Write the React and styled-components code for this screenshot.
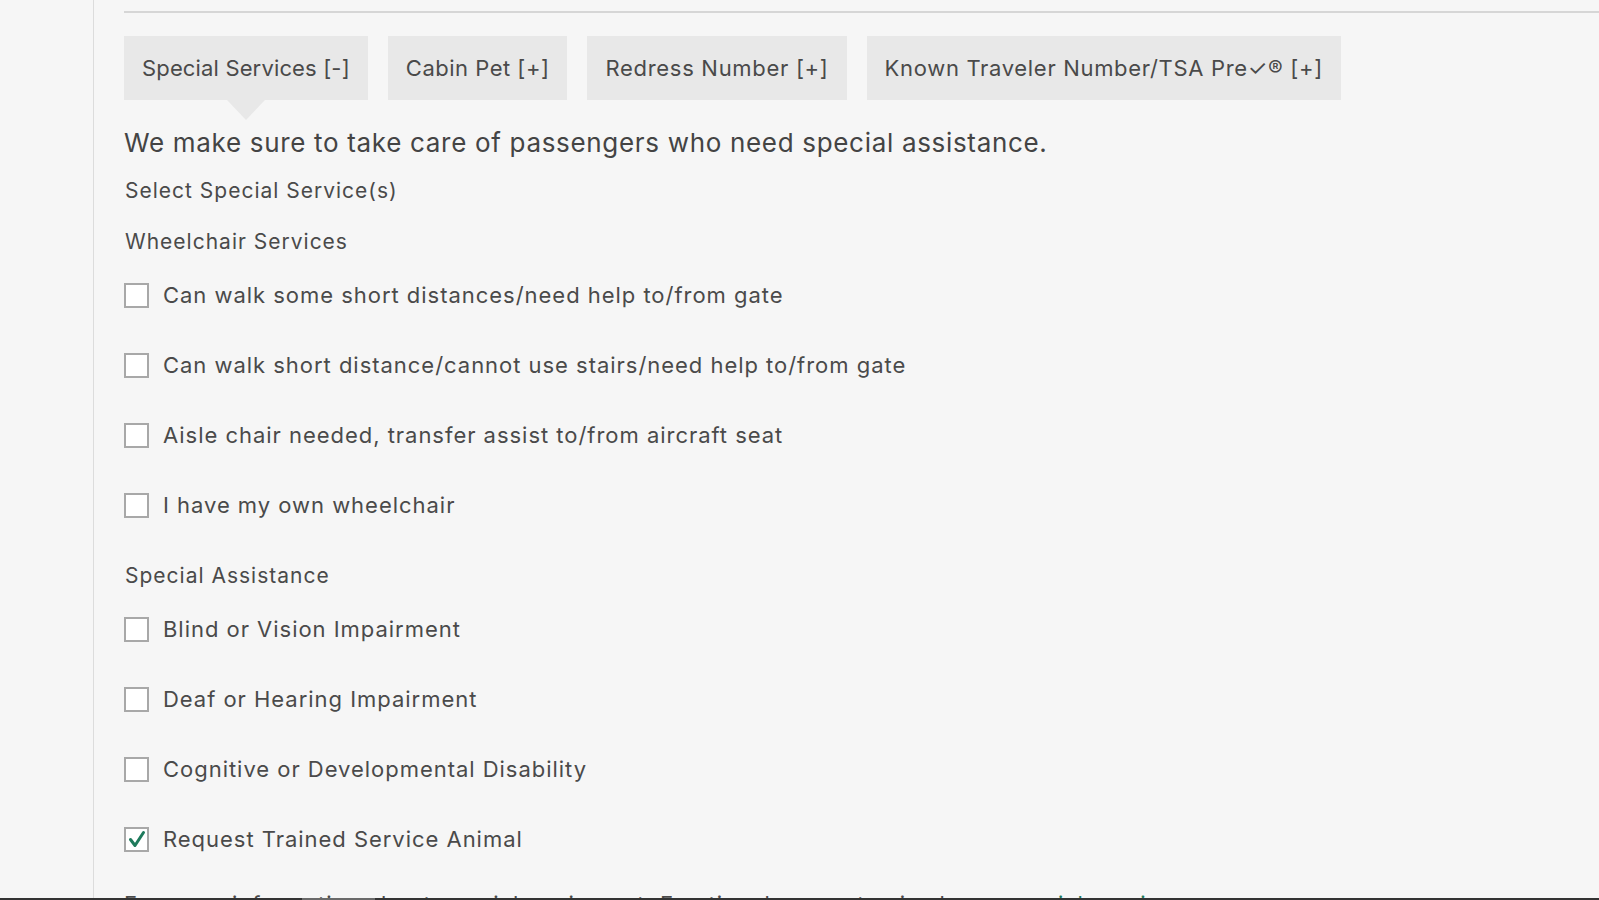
import React from "react";
import styled, { createGlobalStyle } from "styled-components";

const GlobalStyle = createGlobalStyle`
  html, body {
    margin: 0;
    padding: 0;
    background: #f6f6f6;
  }
  body {
    font-family: Inter, "Open Sans", sans-serif;
    color: #444;
  }
`;

const Page = styled.div`
  display: flex;
  height: 100vh;
  overflow: hidden;
  background: #f6f6f6;
`;

const Rail = styled.div`
  width: 93px;
  flex-shrink: 0;
  border-right: 1px solid #dcdcdc;
`;

const Main = styled.main`
  flex: 1;
  padding: 11px 0 0 30px;
`;

const TopRule = styled.div`
  border-top: 2px solid #d6d6d6;
`;

const Tabs = styled.div`
  display: flex;
  gap: 20px;
  margin-top: 23px;
`;

const Tab = styled.button`
  position: relative;
  height: 64px;
  padding: 0 18px;
  border: 0;
  background: #e8e8e8;
  color: #4a4a4a;
  font-family: inherit;
  font-size: 22px;
  letter-spacing: ${p => p.$spacing}px;
  cursor: pointer;

  ${p => p.$active && `
    &::after {
      content: "";
      position: absolute;
      left: 50%;
      top: 100%;
      margin-left: -19px;
      border-left: 19px solid transparent;
      border-right: 19px solid transparent;
      border-top: 20px solid #e8e8e8;
    }
  `}
`;

const Lead = styled.h2`
  margin: 27px 0 0;
  font-size: 26px;
  line-height: 32px;
  font-weight: 400;
  letter-spacing: 0.68px;
  color: #444;
`;

const GroupTitle = styled.div`
  margin: ${p => p.$top}px 0 4px 1px;
  font-size: 21px;
  line-height: 28px;
  letter-spacing: 1px;
  color: #4a4a4a;
`;

const Row = styled.label`
  display: flex;
  align-items: center;
  gap: 14px;
  height: 70px;
  font-size: 22px;
  letter-spacing: 0.97px;
  color: #4a4a4a;
  cursor: pointer;
`;

const Box = styled.span`
  width: 21px;
  height: 21px;
  border: 2px solid #a8a8a8;
  background: #fff;
  display: flex;
  align-items: center;
  justify-content: center;
  flex-shrink: 0;
`;

const Note = styled.p`
  margin: 16px 0 0;
  font-size: 22px;
  line-height: 28px;
  letter-spacing: 0.97px;
  color: #4a4a4a;
  white-space: nowrap;

  a {
    color: #1e7a5c;
    text-decoration: none;
  }
`;

const ScrollBar = styled.div`
  position: fixed;
  left: 0;
  right: 0;
  bottom: 0;
  height: 2px;
  background: #333;
`;

const Thumb = styled.div`
  position: absolute;
  left: 302px;
  width: 73px;
  top: 0;
  bottom: 0;
  background: #6a6a6a;
`;

const Check = () => (
  <svg width="20" height="20" viewBox="0 0 20 20">
    <path d="M3.5 10.5 L8 16.5 L16.5 3.5" fill="none" stroke="#1e7a5c" strokeWidth="3" strokeLinecap="round" strokeLinejoin="round" />
  </svg>
);

const tabs = [
  { label: "Special Services [-]", active: true, spacing: 0.15 },
  { label: "Cabin Pet [+]", spacing: 0.5 },
  { label: "Redress Number [+]", spacing: 0.7 },
  { label: "Known Traveler Number/TSA Pre\u2713\u00ae [+]", spacing: 0.68 },
];

const wheelchair = [
  "Can walk some short distances/need help to/from gate",
  "Can walk short distance/cannot use stairs/need help to/from gate",
  "Aisle chair needed, transfer assist to/from aircraft seat",
  "I have my own wheelchair",
];

const assistance = [
  { label: "Blind or Vision Impairment" },
  { label: "Deaf or Hearing Impairment" },
  { label: "Cognitive or Developmental Disability" },
  { label: "Request Trained Service Animal", checked: true },
];

const Option = ({ label, checked }) => (
  <Row>
    <Box>{checked && <Check />}</Box>
    {label}
  </Row>
);

export default function App() {
  return (
    <Page>
      <GlobalStyle />
      <Rail />
      <Main>
        <TopRule />
        <Tabs>
          {tabs.map(t => (
            <Tab key={t.label} $active={t.active} $spacing={t.spacing}>{t.label}</Tab>
          ))}
        </Tabs>
        <Lead>We make sure to take care of passengers who need special assistance.</Lead>
        <GroupTitle $top={18}>Select Special Service(s)</GroupTitle>
        <GroupTitle $top={23}>Wheelchair Services</GroupTitle>
        {wheelchair.map(l => <Option key={l} label={l} />)}
        <GroupTitle $top={22}>Special Assistance</GroupTitle>
        {assistance.map(a => <Option key={a.label} {...a} />)}
        <Note>
          For more information about special equipment, Emotional support animals, or <a href="#">special services</a>
        </Note>
      </Main>
      <ScrollBar><Thumb /></ScrollBar>
    </Page>
  );
}
